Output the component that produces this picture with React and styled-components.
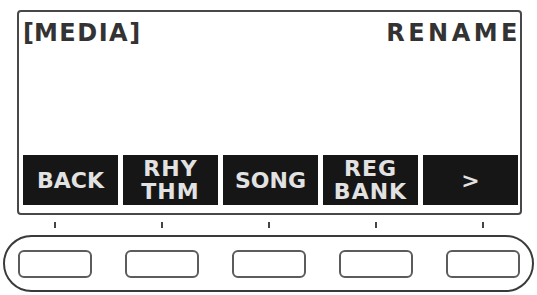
import React from 'react';
import styled, { createGlobalStyle } from 'styled-components';

const GlobalStyle = createGlobalStyle`
  html, body {
    margin: 0;
    padding: 0;
    background: #ffffff;
  }
  body {
    font-family: "DejaVu Sans", "Liberation Sans", sans-serif;
  }
`;

const Panel = styled.div`
  width: 537px;
  height: 295px;
  padding-top: 10px;
  box-sizing: border-box;
  display: flex;
  flex-direction: column;
`;

const Screen = styled.div`
  width: 505px;
  height: 205px;
  margin-left: 17px;
  box-sizing: border-box;
  border: 2px solid #484848;
  border-radius: 4px;
  padding: 10px 2px 8px 4px;
  display: flex;
  flex-direction: column;
`;

const Header = styled.div`
  display: flex;
  justify-content: space-between;
  font-size: 24px;
  line-height: 23px;
  font-weight: bold;
  color: #333333;
`;

const HeaderText = styled.span`
  letter-spacing: ${(p) => (p.right ? '3.5px' : '1.5px')};
  margin-right: ${(p) => (p.right ? '-3px' : '0')};
`;

const Bracket = styled.span`
  letter-spacing: 0;
`;

const SoftKeys = styled.div`
  margin-top: auto;
  display: flex;
  gap: 5px;
  height: 50px;
`;

const SoftKey = styled.div`
  flex: 1;
  background: #161616;
  color: #e2e2e2;
  display: flex;
  flex-direction: column;
  align-items: center;
  justify-content: center;
  font-size: 22px;
  line-height: 23px;
  font-weight: bold;
  letter-spacing: ${(p) => (p.stacked ? '1px' : '0')};
`;

const TickRow = styled.div`
  display: flex;
  justify-content: space-between;
  margin-top: 7px;
  padding: 0 17px 0 18px;
  height: 6px;
`;

const Tick = styled.div`
  width: 74px;
  display: flex;
  justify-content: center;

  &::before {
    content: '';
    width: 2px;
    height: 6px;
    background: #444444;
  }
`;

const ButtonBar = styled.div`
  margin: 7px 3px 0 3px;
  height: 57px;
  box-sizing: border-box;
  border: 2px solid #3a3a3a;
  border-radius: 29px;
  padding: 0 12px 0 13px;
  display: flex;
  align-items: center;
  justify-content: space-between;
`;

const FnButton = styled.div`
  width: 74px;
  height: 28px;
  box-sizing: border-box;
  border: 2px solid #5c5c5c;
  border-radius: 6px;
`;

const keys = [['BACK'], ['RHY', 'THM'], ['SONG'], ['REG', 'BANK'], ['>']];

export default function App() {
  return (
    <>
      <GlobalStyle />
      <Panel>
        <Screen>
          <Header>
            <HeaderText>
              <Bracket>[</Bracket>MEDIA<Bracket>]</Bracket>
            </HeaderText>
            <HeaderText right>RENAME</HeaderText>
          </Header>
          <SoftKeys>
            {keys.map((lines, i) => (
              <SoftKey key={i} stacked={lines.length > 1}>
                {lines.map((l) => (
                  <span key={l}>{l}</span>
                ))}
              </SoftKey>
            ))}
          </SoftKeys>
        </Screen>
        <TickRow>
          {keys.map((_, i) => (
            <Tick key={i} />
          ))}
        </TickRow>
        <ButtonBar>
          {keys.map((_, i) => (
            <FnButton key={i} />
          ))}
        </ButtonBar>
      </Panel>
    </>
  );
}
